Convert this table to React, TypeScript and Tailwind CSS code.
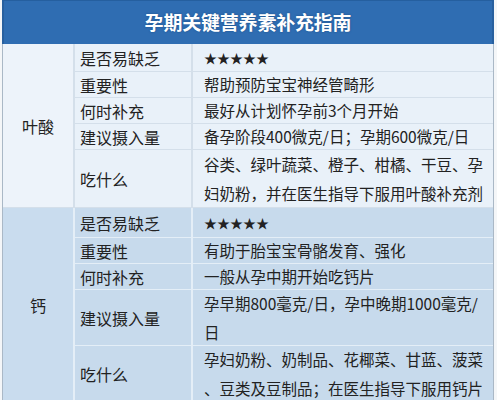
const font = { fontFamily: '"Noto Sans CJK SC", "Noto Sans", sans-serif' }

type Row = { label: string; lines: string[]; h: string }

const folic: Row[] = [
  { label: '是否易缺乏', lines: ['★★★★★'], h: 'h-[27px]' },
  { label: '重要性', lines: ['帮助预防宝宝神经管畸形'], h: 'h-[26px]' },
  { label: '何时补充', lines: ['最好从计划怀孕前3个月开始'], h: 'h-[26px]' },
  { label: '建议摄入量', lines: ['备孕阶段400微克/日；孕期600微克/日'], h: 'h-[26px]' },
  {
    label: '吃什么',
    lines: ['谷类、绿叶蔬菜、橙子、柑橘、干豆、孕', '妇奶粉，并在医生指导下服用叶酸补充剂'],
    h: 'h-[58px]',
  },
]

const calcium: Row[] = [
  { label: '是否易缺乏', lines: ['★★★★★'], h: 'h-[29px]' },
  { label: '重要性', lines: ['有助于胎宝宝骨骼发育、强化'], h: 'h-[26px]' },
  { label: '何时补充', lines: ['一般从孕中期开始吃钙片'], h: 'h-[26px]' },
  { label: '建议摄入量', lines: ['孕早期800毫克/日，孕中晚期1000毫克/', '日'], h: 'h-[56px]' },
  {
    label: '吃什么',
    lines: ['孕妇奶粉、奶制品、花椰菜、甘蓝、菠菜', '、豆类及豆制品；在医生指导下服用钙片'],
    h: 'h-[56px]',
  },
]

function Section({ name, rows, light }: { name: string; rows: Row[]; light: boolean }) {
  const line = light ? 'border-[#d4dfea]' : 'border-[#e4eef7]'
  return (
    <div className={`flex ${light ? 'bg-[#e9f1f9]' : 'bg-[#c7daec]'} border-b ${line}`}>
      <div
        className={`w-[70px] shrink-0 flex items-center justify-center text-[16px] text-[#222] ${
          light ? 'bg-[#edf3fa]' : 'bg-[#c9dcee]'
        }`}
      >
        {name}
      </div>
      <div className={`flex-1 flex flex-col border-l-2 ${line}`}>
        {rows.map((r, i) => (
          <div key={r.label} className={`flex ${r.h} ${i > 0 ? `border-t ${line}` : ''}`}>
            <div className="w-[116px] shrink-0 flex items-center pl-[5px] text-[16px] text-[#222]">
              {r.label}
            </div>
            <div
              className={`flex-1 flex flex-col justify-center pl-[11px] border-l-2 ${line} text-[#222] whitespace-nowrap ${
                r.lines[0].startsWith('★') ? 'text-[13px]' : 'text-[15.5px] leading-[29px]'
              }`}
            >
              {r.lines.map((t) => (
                <div key={t}>{t}</div>
              ))}
            </div>
          </div>
        ))}
      </div>
    </div>
  )
}

export default function App() {
  return (
    <div className="w-[497px] h-[400px] overflow-hidden bg-[#f4f6f8] pl-[2px] pr-[3px]" style={font}>
      <div className="h-[44px] bg-[#2f6db2] border-t border-[#255f9f] border-x-2 border-x-[#28609f] flex items-center justify-center">
        <span className="text-white font-bold text-[19px] tracking-[-0.2px] [text-shadow:0_0_2px_#1b4d85]">
          孕期关键营养素补充指南
        </span>
      </div>
      <div className="border-x border-[#aab8c6] overflow-hidden">
        <Section name="叶酸" rows={folic} light />
        <Section name="钙" rows={calcium} light={false} />
      </div>
    </div>
  )
}
